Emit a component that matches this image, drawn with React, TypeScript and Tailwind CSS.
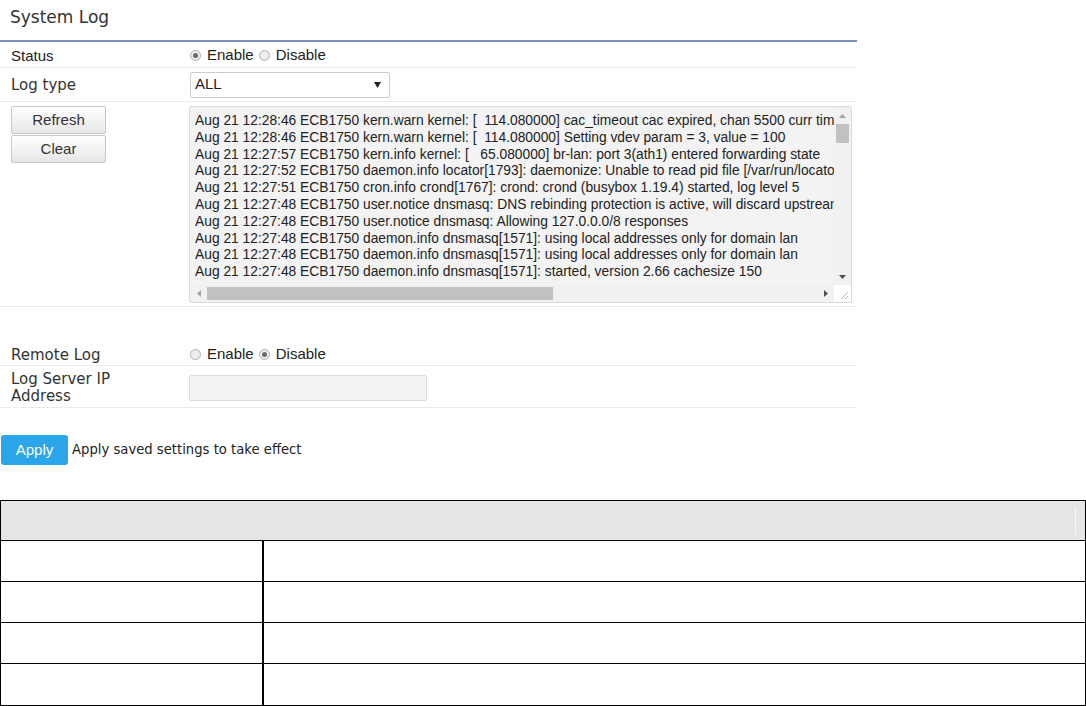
import React from 'react';

const arial = "font-['Liberation_Sans',Arial,sans-serif]";
const verdana = "font-['DejaVu_Sans',Verdana,sans-serif]";

const LOG_LINES = [
  'Aug 21 12:28:46 ECB1750 kern.warn kernel: [  114.080000] cac_timeout cac expired, chan 5500 curr time 114080',
  'Aug 21 12:28:46 ECB1750 kern.warn kernel: [  114.080000] Setting vdev param = 3, value = 100',
  'Aug 21 12:27:57 ECB1750 kern.info kernel: [   65.080000] br-lan: port 3(ath1) entered forwarding state',
  'Aug 21 12:27:52 ECB1750 daemon.info locator[1793]: daemonize: Unable to read pid file [/var/run/locator.pid]',
  'Aug 21 12:27:51 ECB1750 cron.info crond[1767]: crond: crond (busybox 1.19.4) started, log level 5',
  'Aug 21 12:27:48 ECB1750 user.notice dnsmasq: DNS rebinding protection is active, will discard upstream RFC1918 responses',
  'Aug 21 12:27:48 ECB1750 user.notice dnsmasq: Allowing 127.0.0.0/8 responses',
  'Aug 21 12:27:48 ECB1750 daemon.info dnsmasq[1571]: using local addresses only for domain lan',
  'Aug 21 12:27:48 ECB1750 daemon.info dnsmasq[1571]: using local addresses only for domain lan',
  'Aug 21 12:27:48 ECB1750 daemon.info dnsmasq[1571]: started, version 2.66 cachesize 150',
];

const Radio = ({ checked }: { checked?: boolean }) => (
  <span className="w-[11px] h-[11px] rounded-full border border-[#b0b0b0] bg-[#ededed] flex items-center justify-center shrink-0">
    {checked && <span className="w-[5px] h-[5px] rounded-full bg-[#6a6a6a]" />}
  </span>
);

const RadioPair = ({ enabled }: { enabled: boolean }) => (
  <div className={`flex items-center text-[15px] text-[#222] ${arial}`}>
    <Radio checked={enabled} />
    <span className="ml-[6px]">Enable</span>
    <span className="ml-[5px]"><Radio checked={!enabled} /></span>
    <span className="ml-[6px]">Disable</span>
  </div>
);

// little triangles for the fake scrollbars
const Tri = ({ dir, color }: { dir: 'up' | 'down' | 'left' | 'right'; color: string }) => {
  const pts = {
    up: '0,4 3.5,0 7,4',
    down: '0,0 7,0 3.5,4',
    left: '4,0 4,7 0,3.5',
    right: '0,0 0,7 4,3.5',
  }[dir];
  const vertical = dir === 'up' || dir === 'down';
  return (
    <svg width={vertical ? 7 : 4} height={vertical ? 4 : 7} viewBox={vertical ? '0 0 7 4' : '0 0 4 7'}>
      <polygon points={pts} fill={color} />
    </svg>
  );
};

const LogBox = () => (
  <div className="w-[663px] h-[197px] border border-[#dadada] rounded-[2px] bg-[#f3f3f3] grid grid-cols-[1fr_17px] grid-rows-[1fr_17px] overflow-hidden">
    <div className={`overflow-hidden pl-[5px] pt-[6px] whitespace-pre text-[13.8px] leading-[16.8px] text-[#222] ${arial}`}>
      {LOG_LINES.map((l, i) => (
        <div key={i}>{l}</div>
      ))}
    </div>
    <div className="bg-[#f1f1f1] flex flex-col">
      <div className="h-[17px] flex items-center justify-center pt-[1px]">
        <Tri dir="up" color="#a3a3a3" />
      </div>
      <div className="h-[19px] mx-[2px] bg-[#c1c1c1]" />
      <div className="flex-1" />
      <div className="h-[17px] flex items-center justify-center">
        <Tri dir="down" color="#505050" />
      </div>
    </div>
    <div className="bg-[#f1f1f1] flex items-stretch">
      <div className="w-[17px] flex items-center justify-center">
        <Tri dir="left" color="#a3a3a3" />
      </div>
      <div className="w-[346px] my-[2px] bg-[#c1c1c1]" />
      <div className="flex-1" />
      <div className="w-[17px] flex items-center justify-center">
        <Tri dir="right" color="#505050" />
      </div>
    </div>
    <div className="bg-white flex items-end justify-end p-[2px]">
      <svg width="9" height="9" viewBox="0 0 9 9">
        <line x1="1" y1="8" x2="8" y2="1" stroke="#b5b5b5" strokeWidth="1" />
        <line x1="5" y1="8" x2="8" y2="5" stroke="#b5b5b5" strokeWidth="1" />
      </svg>
    </div>
  </div>
);

const GrayButton = ({ children }: { children: React.ReactNode }) => (
  <button className={`w-[95px] h-[28px] border border-[#c8c8c8] rounded-[2px] bg-gradient-to-b from-white to-[#e6e6e6] text-[15px] text-[#333] ${arial}`}>
    {children}
  </button>
);

const Row = ({ label, children, className = '' }: { label: React.ReactNode; children: React.ReactNode; className?: string }) => (
  <div className={`flex items-center border-b border-[#ebebeb] ${className}`}>
    <div className="w-[189px] pl-[11px] shrink-0">{label}</div>
    <div className="flex-1">{children}</div>
  </div>
);

export default function App() {
  return (
    <div className="w-[1086px] h-[706px] bg-white overflow-hidden text-[#222]">
      <div className="w-[857px]">
        <div className="h-[42px] border-b-2 border-[#7d90bd]">
          <div className={`pl-[10px] pt-[7px] text-[17px] leading-[20px] text-[#333] ${verdana}`}>System Log</div>
        </div>

        <Row className="h-[26px] pt-[1px]" label={<span className={`text-[15px] ${arial}`}>Status</span>}>
          <div className="pl-[1px]"><RadioPair enabled /></div>
        </Row>

        <Row className="h-[34px]" label={<span className={`text-[15px] text-[#333] ${verdana}`}>Log type</span>}>
          <div className={`ml-[1px] w-[200px] h-[26px] border border-[#cccccc] rounded-[2px] bg-white flex items-center justify-between pl-[4px] pr-[8px] text-[15px] ${arial}`}>
            <span>ALL</span>
            <svg width="7" height="6" viewBox="0 0 7 6"><polygon points="0,0 7,0 3.5,6" fill="#222" /></svg>
          </div>
        </Row>

        <div className="flex border-b border-[#ebebeb] pt-[4px] pb-[3px]">
          <div className="w-[189px] pl-[11px] shrink-0 flex flex-col gap-[1px]">
            <GrayButton>Refresh</GrayButton>
            <GrayButton>Clear</GrayButton>
          </div>
          <LogBox />
        </div>

        <Row className="h-[23px] mt-[36px]" label={<span className={`text-[15px] text-[#333] ${verdana}`}>Remote Log</span>}>
          <div className="pl-[1px]"><RadioPair enabled={false} /></div>
        </Row>

        <Row
          className="h-[42px] pt-[2px]"
          label={
            <div className={`text-[15px] leading-[17px] text-[#333] ${verdana}`}>
              Log Server IP
              <br />
              Address
            </div>
          }
        >
          <div className="w-[238px] h-[26px] border border-[#dcdcdc] rounded-[2px] bg-[#f3f3f3]" />
        </Row>
      </div>

      <div className="flex items-center mt-[27px] pl-[1px]">
        <button className={`w-[67px] h-[30px] rounded-[3px] bg-[#2aa5ea] text-white text-[15px] ${arial}`}>Apply</button>
        <span className={`ml-[4px] text-[13.2px] text-[#222] ${verdana}`}>Apply saved settings to take effect</span>
      </div>

      <div className="mt-[35px] w-full border border-black">
        <div className="h-[40px] bg-[#e5e5e5] border-b border-black flex items-center justify-end pr-[9px]">
          <div className="w-px h-[28px] bg-[#f8f8f8]" />
        </div>
        {[0, 1, 2, 3].map((i) => (
          <div key={i} className={`flex h-[41px] ${i < 3 ? 'border-b border-black' : ''}`}>
            <div className="w-[263px] border-r-2 border-black" />
            <div className="flex-1" />
          </div>
        ))}
      </div>
    </div>
  );
}
